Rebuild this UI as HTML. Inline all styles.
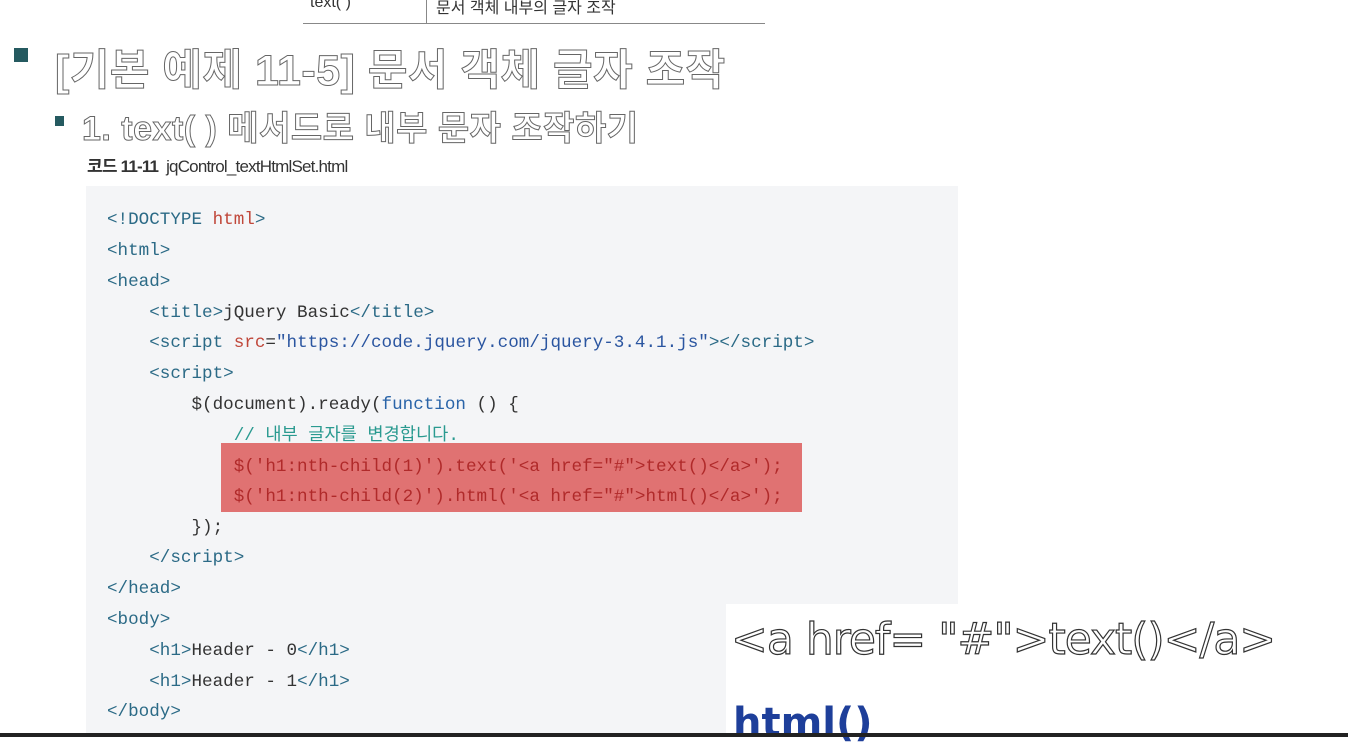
<!DOCTYPE html>
<html><head><meta charset="utf-8"><style>
body{margin:0;width:1348px;height:737px;background:#fff;position:relative;overflow:hidden;font-family:"Liberation Sans","Noto Sans CJK KR",sans-serif}
.a{position:absolute}
.code{position:absolute;left:86px;top:186px;width:872px;height:551px;background:#f4f5f7}
.ln{position:absolute;left:107px;font-family:"Liberation Mono","Noto Sans CJK KR",monospace;font-size:17.6px;color:#333;white-space:pre;line-height:22px}
.t{color:#2b6a86}.r{color:#c0473a}.s{color:#2a55a0}.c{color:#2a9a90}.k{color:#2a64a8}
.hl{color:#b02a2a}
.out{color:#fff;-webkit-text-stroke:1px #666;font-weight:bold}
</style></head><body>
<div class="a" style="left:303px;top:23px;width:462px;height:1px;background:#888"></div>
<div class="a" style="left:426px;top:0;width:1px;height:23px;background:#888"></div>
<div class="a" style="left:310px;top:-6px;font-size:16px;color:#333">text( )</div>
<div class="a" style="left:436px;top:-6px;font-size:16px;color:#333">문서 객체 내부의 글자 조작</div>
<div class="a" style="left:14px;top:48px;width:14px;height:14px;background:#255a60"></div>
<div class="a out" style="left:55px;top:36px;font-size:43px;letter-spacing:0.5px">[기본 예제 11-5] 문서 객체 글자 조작</div>
<div class="a" style="left:55px;top:116px;width:9px;height:10px;background:#255a60"></div>
<div class="a out" style="left:82px;top:101px;font-size:34px;letter-spacing:0.5px">1. text( ) 메서드로 내부 문자 조작하기</div>
<div class="a" style="left:87px;top:152px;font-size:17px;color:#333;letter-spacing:-0.8px"><b>코드 11-11</b>&nbsp; jqControl_textHtmlSet.html</div>
<div class="code"></div>
<div class="a" style="left:221px;top:443px;width:581px;height:69px;background:#e07272"></div>
<div class="ln" style="top:209px"><span class="t">&lt;!DOCTYPE </span><span class="r">html</span><span class="t">&gt;</span></div>
<div class="ln" style="top:240px"><span class="t">&lt;html&gt;</span></div>
<div class="ln" style="top:271px"><span class="t">&lt;head&gt;</span></div>
<div class="ln" style="top:302px">    <span class="t">&lt;title&gt;</span>jQuery Basic<span class="t">&lt;/title&gt;</span></div>
<div class="ln" style="top:332px">    <span class="t">&lt;script </span><span class="r">src</span>=<span class="s">"https://code.jquery.com/jquery-3.4.1.js"</span><span class="t">&gt;&lt;/script&gt;</span></div>
<div class="ln" style="top:363px">    <span class="t">&lt;script&gt;</span></div>
<div class="ln" style="top:394px">        $(document).ready(<span class="k">function</span> () {</div>
<div class="ln c" style="top:425px">            // 내부 글자를 변경합니다.</div>
<div class="ln hl" style="top:456px">            $('h1:nth-child(1)').text('&lt;a href="#"&gt;text()&lt;/a&gt;');</div>
<div class="ln hl" style="top:486px">            $('h1:nth-child(2)').html('&lt;a href="#"&gt;html()&lt;/a&gt;');</div>
<div class="ln" style="top:517px">        });</div>
<div class="ln" style="top:547px">    <span class="t">&lt;/script&gt;</span></div>
<div class="ln" style="top:578px"><span class="t">&lt;/head&gt;</span></div>
<div class="ln" style="top:609px"><span class="t">&lt;body&gt;</span></div>
<div class="ln" style="top:640px">    <span class="t">&lt;h1&gt;</span>Header - 0<span class="t">&lt;/h1&gt;</span></div>
<div class="ln" style="top:671px">    <span class="t">&lt;h1&gt;</span>Header - 1<span class="t">&lt;/h1&gt;</span></div>
<div class="ln" style="top:701px"><span class="t">&lt;/body&gt;</span></div>
<div class="a" style="left:726px;top:604px;width:622px;height:133px;background:#fff"></div>
<div class="a" style="left:731px;top:614px;font-family:'DejaVu Sans',sans-serif;font-size:44px;color:#fff;-webkit-text-stroke:1.2px #333;letter-spacing:-1px">&lt;a href= "#"&gt;text()&lt;/a&gt;</div>
<div class="a" style="left:733px;top:700px;font-family:'DejaVu Sans',sans-serif;font-size:40px;color:#1e3f9a;font-weight:bold">html()</div>
<div class="a" style="left:0;top:733px;width:1348px;height:4px;background:#222"></div>
</body></html>
